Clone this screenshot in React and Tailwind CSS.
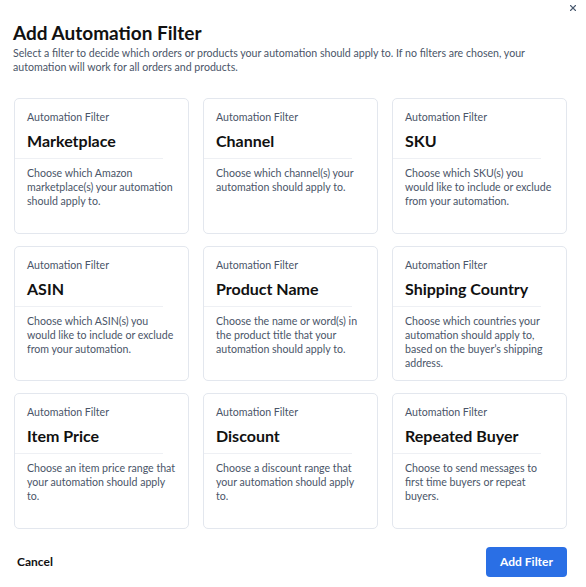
import React from 'react';
import { X } from 'lucide-react';

const filters = [
  { title: 'Marketplace', lines: ['Choose which Amazon', 'marketplace(s) your automation', 'should apply to.'] },
  { title: 'Channel', lines: ['Choose which channel(s) your', 'automation should apply to.'] },
  { title: 'SKU', lines: ['Choose which SKU(s) you', 'would like to include or exclude', 'from your automation.'] },
  { title: 'ASIN', lines: ['Choose which ASIN(s) you', 'would like to include or exclude', 'from your automation.'] },
  { title: 'Product Name', lines: ['Choose the name or word(s) in', 'the product title that your', 'automation should apply to.'] },
  { title: 'Shipping Country', lines: ['Choose which countries your', 'automation should apply to,', 'based on the buyer\u2019s shipping', 'address.'] },
  { title: 'Item Price', lines: ['Choose an item price range that', 'your automation should apply', 'to.'] },
  { title: 'Discount', lines: ['Choose a discount range that', 'your automation should apply', 'to.'] },
  { title: 'Repeated Buyer', lines: ['Choose to send messages to', 'first time buyers or repeat', 'buyers.'] },
];

const FilterCard = ({ title, lines }) => (
  <div className="h-[135.5px] bg-white border border-[#e3e7ee] rounded-[5px] pt-[11px]">
    <div className="pl-[12px] text-[10.6px] leading-[14px] text-[#4a5568]">Automation Filter</div>
    <div className="pl-[12px] mt-[7px] text-[16px] leading-[20px] font-bold text-[#111]">{title}</div>
    <div className="mt-[7px] mr-[25px] border-t border-[#eef0f4]" />
    <p className="pl-[12px] mt-[7px] text-[10.6px] leading-[14px] text-[#4a5568] whitespace-nowrap">
      {lines.map(l => <span key={l} className="block">{l}</span>)}
    </p>
  </div>
);

export default function App() {
  return (
    <div className="w-[586px] h-[587px] bg-white relative" style={{ fontFamily: 'Lato, "Noto Sans", sans-serif' }}>
      <button className="absolute left-[568px] top-[3px] text-[#4a5a70]">
        <X size={10} strokeWidth={2.6} />
      </button>
      <div className="px-[13px] pt-[22px]">
        <h1 className="text-[19px] leading-[22px] font-bold text-[#111]">Add Automation Filter</h1>
        <p className="mt-[2px] text-[10.6px] leading-[14px] text-[#4a5568]">
          Select a filter to decide which orders or products your automation should apply to. If no filters are chosen, your automation will work for all orders and products.
        </p>
      </div>
      <div className="grid grid-cols-3 gap-x-[14px] gap-y-[12px] px-[14px] mt-[24px] w-[581px]">
        {filters.map(f => <FilterCard key={f.title} {...f} />)}
      </div>
      <div className="flex items-center justify-between pl-[17px] pr-[19px] mt-[18px]">
        <button className="text-[12px] font-bold text-[#111]">Cancel</button>
        <button className="w-[81px] h-[30px] rounded-[4px] bg-[#2a6fe5] text-white text-[12px] font-bold">Add Filter</button>
      </div>
    </div>
  );
}
